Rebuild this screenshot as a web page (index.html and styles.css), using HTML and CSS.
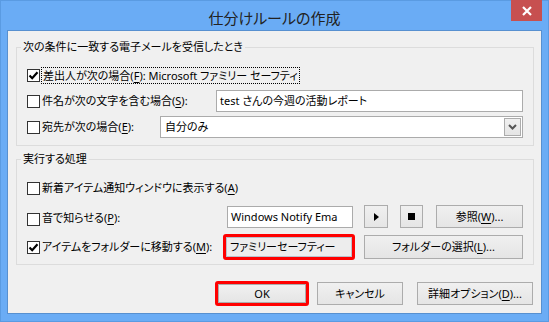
FILE: index.html
```html
<!DOCTYPE html>
<html lang="ja">
<head>
    <meta charset="UTF-8">
    <title>仕分けルールの作成</title>
    <link rel="stylesheet" href="styles.css">
</head>
<body>
<div class="window">
    <div class="titlebar">
        <span class="title">仕分けルールの作成</span>
        <span class="close">
            <svg width="10" height="10" viewBox="0 0 10 10"><path d="M1 1L9 9M9 1L1 9" stroke="#fff" stroke-width="2.2"/></svg>
        </span>
    </div>
    <div class="client">
        <fieldset class="group group-cond">
            <legend>次の条件に一致する電子メールを受信したとき</legend>
            <div class="rows">
                <div class="row">
                    <span class="check checked focus-check"><svg width="11" height="11" viewBox="0 0 11 11"><path d="M1.5 5.5L4.2 8.2L9.5 2.2" fill="none" stroke="#000" stroke-width="2.2"/></svg></span>
                    <span class="label focus">差出人が次の場合(<u>F</u>): Microsoft ファミリー セーフティ</span>
                </div>
                <div class="row">
                    <span class="check"></span>
                    <span class="label">件名が次の文字を含む場合(<u>S</u>):</span>
                    <span class="textbox subject">test さんの今週の活動レポート</span>
                </div>
                <div class="row">
                    <span class="check"></span>
                    <span class="label">宛先が次の場合(<u>E</u>):</span>
                    <span class="combo">
                        <span>自分のみ</span>
                        <span class="combo-btn"><svg width="9" height="6" viewBox="0 0 9 6"><path d="M1 1L4.5 4.5L8 1" fill="none" stroke="#555" stroke-width="2"/></svg></span>
                    </span>
                </div>
            </div>
        </fieldset>
        <fieldset class="group group-action">
            <legend>実行する処理</legend>
            <div class="rows">
                <div class="row">
                    <span class="check"></span>
                    <span class="label">新着アイテム通知ウィンドウに表示する(<u>A</u>)</span>
                </div>
                <div class="row row-sound">
                    <span class="check"></span>
                    <span class="label">音で知らせる(<u>P</u>):</span>
                    <span class="textbox sound">Windows Notify Ema</span>
                    <span class="btn play"><svg width="5" height="8" viewBox="0 0 5 8"><path d="M0 0L5 4L0 8Z" fill="#000"/></svg></span>
                    <span class="btn stop"><span class="square"></span></span>
                    <span class="btn browse">参照(<u>W</u>)...</span>
                </div>
                <div class="row row-move">
                    <span class="check checked"><svg width="11" height="11" viewBox="0 0 11 11"><path d="M1.5 5.5L4.2 8.2L9.5 2.2" fill="none" stroke="#000" stroke-width="2.2"/></svg></span>
                    <span class="label">アイテムをフォルダーに移動する(<u>M</u>):</span>
                    <span class="mark folder-mark"><span class="field">ファミリーセーフティー</span></span>
                    <span class="btn folder">フォルダーの選択(<u>L</u>)...</span>
                </div>
            </div>
        </fieldset>
        <div class="buttons">
            <span class="mark ok-mark"><span class="btn ok">OK</span></span>
            <span class="btn cancel">キャンセル</span>
            <span class="btn detail">詳細オプション(<u>D</u>)...</span>
        </div>
    </div>
</div>
</body>
</html>
```
FILE: styles.css
```css
html,body{
    margin:0;
}
body{
    font:11px/16px "Noto Sans","Noto Sans CJK JP",sans-serif;
    font-feature-settings:"palt";
    color:#000;
}
.window{
    width:549px;
    height:322px;
    box-sizing:border-box;
    border:1px solid #5a9be2;
    background-color:#6aacf5;
    padding:0 6px 7px;
    display:flex;
    flex-direction:column;
}
.titlebar{
    height:29px;
    flex-shrink:0;
    position:relative;
    display:flex;
    justify-content:center;
    align-items:center;
    padding-top:4px;
    box-sizing:border-box;
}
.title{
    font-size:15px;
    color:#222;
}
.close{
    position:absolute;
    top:-1px;
    right:0;
    width:31px;
    height:21px;
    background-color:#c75050;
    display:flex;
    justify-content:center;
    align-items:center;
}
.client{
    flex:1;
    border:1px solid #5790d0;
    background-color:#f0f0f0;
    display:flex;
    flex-direction:column;
}

/* group boxes */
.group{
    margin:8px 7px 0 8px;
    padding:9px 10px 7px;
    border:1px solid #dcdcdc;
    min-width:0;
}
.group legend{
    margin-left:-6px;
    padding:0 2px;
    line-height:16px;
}
.group-action{
    margin-top:5px;
    padding-top:10px;
    padding-bottom:4px;
}
.rows{
    display:flex;
    flex-direction:column;
    gap:4px;
}
.group-action .rows{
    gap:6px;
}
.row{
    height:22px;
    display:flex;
    align-items:center;
}
.row-sound{
    height:23px;
}
.row-move{
    height:26px;
}
.check{
    width:13px;
    height:13px;
    box-sizing:border-box;
    border:1px solid #333;
    background-color:#fff;
    margin-right:2px;
    flex-shrink:0;
    display:flex;
    justify-content:center;
    align-items:center;
}
.row-sound .check{
    margin-top:5px;
}
.row-sound .label{
    margin-top:2px;
}
.focus-check{
    margin-right:1px;
}
.label{
    white-space:nowrap;
}
.focus{
    border:1px dotted #000;
    padding:0 1px;
    line-height:15px;
}
u{
    text-decoration-thickness:1px;
    text-underline-offset:2px;
}

/* inputs */
.textbox{
    height:22px;
    box-sizing:border-box;
    border:1px solid #ababab;
    background-color:#fff;
    padding:0 3px;
    line-height:20px;
    white-space:nowrap;
    overflow:hidden;
    margin-left:auto;
}
.subject{
    width:307px;
}
.sound{
    width:126px;
}
.combo{
    width:363px;
    height:22px;
    box-sizing:border-box;
    border:1px solid #ababab;
    background-color:#fff;
    padding-left:4px;
    margin-left:auto;
    display:flex;
    align-items:center;
}
.combo-btn{
    margin-left:auto;
    margin-right:1px;
    width:17px;
    height:18px;
    box-sizing:border-box;
    border:1px solid #acacac;
    background:linear-gradient(#f0f0f0,#e5e5e5);
    display:flex;
    justify-content:center;
    align-items:center;
}

/* buttons */
.btn{
    height:23px;
    box-sizing:border-box;
    border:1px solid #acacac;
    background:linear-gradient(#f0f0f0,#e5e5e5);
    display:flex;
    justify-content:center;
    align-items:center;
    white-space:nowrap;
    flex-shrink:0;
}
.play{
    width:24px;
    margin-left:11px;
}
.stop{
    width:23px;
    margin-left:12px;
}
.square{
    width:7px;
    height:7px;
    background-color:#000;
}
.browse{
    width:87px;
    margin-left:13px;
}
.folder{
    width:159px;
    height:24px;
    margin-left:9px;
}

/* red marks */
.mark{
    box-sizing:border-box;
    border:3px solid #f00;
    border-radius:3px;
    display:flex;
    flex-shrink:0;
}
.folder-mark{
    width:132px;
    height:26px;
    margin-left:auto;
}
.field{
    flex:1;
    border:1px solid #b9c1cc;
    background-color:#ededed;
    padding:0 3px;
    line-height:18px;
    white-space:nowrap;
    overflow:hidden;
}
.buttons{
    margin-top:16px;
    padding-right:8px;
    display:flex;
    justify-content:flex-end;
    align-items:center;
}
.ok-mark{
    width:94px;
    height:25px;
}
.ok-mark .btn{
    flex:1;
    height:19px;
}
.cancel{
    width:86px;
    margin-left:8px;
}
.detail{
    width:116px;
    margin-left:14px;
}
```
